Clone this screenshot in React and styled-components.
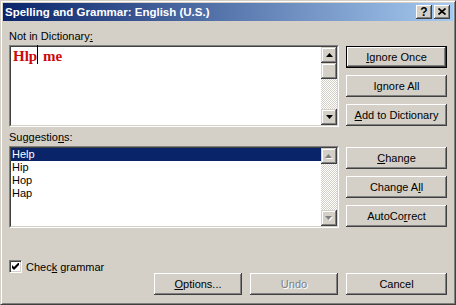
import React from 'react';
import styled, { createGlobalStyle, css } from 'styled-components';

// Classic Win2000 "Spelling and Grammar" dialog
const FACE = '#D4D0C8';

const GlobalStyle = createGlobalStyle`
  body {
    margin: 0;
    background: ${FACE};
    font-family: "Liberation Sans", Arial, sans-serif;
    font-size: 11px;
  }
`;

const raised = css`
  box-shadow: inset -1px -1px #404040, inset 1px 1px #ffffff, inset -2px -2px #808080;
`;

const Window = styled.div`
  width: 456px;
  height: 305px;
  box-sizing: border-box;
  background: ${FACE};
  border: 1px solid;
  border-color: ${FACE} #404040 #404040 ${FACE};
  box-shadow: inset 1px 1px #ffffff, inset -1px -1px #808080;
  padding: 2px;
  display: flex;
  flex-direction: column;
`;

const TitleBar = styled.div`
  height: 18px;
  display: flex;
  align-items: center;
  padding: 0 3px 0 2px;
  background: linear-gradient(to right, #0a246a, #a6caf0);
`;

const Title = styled.div`
  flex: 1;
  color: #ffffff;
  font-weight: bold;
  font-size: 11.5px;
  white-space: nowrap;
`;

const CaptionButton = styled.div`
  width: 16px;
  height: 14px;
  margin-left: ${(p) => (p.$gap ? '2px' : '0')};
  background: ${FACE};
  ${raised};
  display: flex;
  align-items: center;
  justify-content: center;
  font-weight: bold;
  font-size: 12px;
  color: #000;
  line-height: 14px;
  padding-bottom: 1px;
  box-sizing: border-box;
`;

const Body = styled.div`
  flex: 1;
  padding: 9px 6px 0 6px;
  display: flex;
  flex-direction: column;
`;

const Section = styled.div`
  display: flex;
  gap: 7px;
  margin-top: ${(p) => p.$top || 0}px;
`;

const Field = styled.div`
  width: 330px;
  display: flex;
  flex-direction: column;
`;

const Label = styled.div`
  line-height: 13px;
  height: 13px;
  margin-bottom: 2px;
  color: #000;
`;

const Well = styled.div`
  height: 82px;
  box-sizing: border-box;
  border: 1px solid;
  border-color: #808080 #ffffff #ffffff #808080;
`;

const WellInner = styled.div`
  height: 100%;
  box-sizing: border-box;
  border: 1px solid;
  border-color: #404040 ${FACE} ${FACE} #404040;
  background: #ffffff;
  display: flex;
`;

const Editor = styled.div`
  flex: 1;
  padding: 1px 2px 0;
  font-family: "Liberation Serif", "Times New Roman", serif;
  font-weight: bold;
  font-size: 15px;
  line-height: 17px;
  color: #cc0a0a;
`;

const Caret = styled.span`
  display: inline-block;
  width: 1px;
  height: 19px;
  background: #000;
  vertical-align: -3px;
  margin: -4px 1px 0 0;
`;

const List = styled.div`
  flex: 1;
  display: flex;
  flex-direction: column;
`;

const ListItem = styled.div`
  height: 13px;
  line-height: 13px;
  padding-left: 1px;
  color: ${(p) => (p.$selected ? '#ffffff' : '#000')};
  background: ${(p) => (p.$selected ? '#0a246a' : 'transparent')};
`;

const ScrollBar = styled.div`
  width: 16px;
  display: flex;
  flex-direction: column;
`;

const ScrollButton = styled.div`
  width: 16px;
  height: 16px;
  flex: none;
  background: ${FACE};
  box-sizing: border-box;
  box-shadow: inset -1px -1px #404040, inset 1px 1px ${FACE}, inset -2px -2px #808080, inset 2px 2px #ffffff;
  display: flex;
  align-items: center;
  justify-content: center;
`;

const Track = styled.div`
  flex: 1;
  background: repeating-conic-gradient(#ffffff 0 25%, ${FACE} 0 50%) 0 0 / 2px 2px;
`;

const ButtonColumn = styled.div`
  padding-top: 16px;
  display: flex;
  flex-direction: column;
  gap: 7px;
`;

const Button = styled.div`
  width: ${(p) => p.$width || 101}px;
  height: 22px;
  box-sizing: border-box;
  background: ${FACE};
  ${raised};
  border: ${(p) => (p.$default ? '1px solid #000' : 'none')};
  display: flex;
  align-items: center;
  justify-content: center;
  padding-bottom: 1px;
  color: ${(p) => (p.$disabled ? '#808080' : '#000')};
  text-shadow: ${(p) => (p.$disabled ? '1px 1px #ffffff' : 'none')};
  white-space: nowrap;
`;

const Footer = styled.div`
  margin-top: 32px;
  display: flex;
  justify-content: space-between;
`;

const CheckRow = styled.div`
  display: flex;
  align-items: center;
  gap: 4px;
  height: 13px;
`;

const CheckBox = styled.div`
  width: 13px;
  height: 13px;
  box-sizing: border-box;
  border: 1px solid;
  border-color: #808080 #ffffff #ffffff #808080;
  box-shadow: inset 1px 1px #404040, inset -1px -1px ${FACE};
  background: #ffffff;
  display: flex;
  align-items: center;
  justify-content: center;
`;

const ButtonRow = styled.div`
  padding-top: 13px;
  display: flex;
  gap: 8px;
`;

const Arrow = ({ up, color = '#000' }) => (
  <svg width="7" height="4" viewBox="0 0 7 4">
    {up ? (
      <polygon points="3.5,0 7,4 0,4" fill={color} />
    ) : (
      <polygon points="0,0 7,0 3.5,4" fill={color} />
    )}
  </svg>
);

const DisabledArrow = ({ up }) => (
  <svg width="8" height="5" viewBox="0 0 8 5">
    {up ? (
      <>
        <polygon points="4.5,1 8,5 1,5" fill="#ffffff" />
        <polygon points="3.5,0 7,4 0,4" fill="#808080" />
      </>
    ) : (
      <>
        <polygon points="1,1 8,1 4.5,5" fill="#ffffff" />
        <polygon points="0,0 7,0 3.5,4" fill="#808080" />
      </>
    )}
  </svg>
);

const App = () => {
  const suggestions = ['Help', 'Hip', 'Hop', 'Hap'];
  return (
    <>
      <GlobalStyle />
      <Window>
        <TitleBar>
          <Title>Spelling and Grammar: English (U.S.)</Title>
          <CaptionButton>?</CaptionButton>
          <CaptionButton $gap>
            <svg width="8" height="7" viewBox="0 0 8 7">
              <path d="M0.5 0.5 L7.5 6.5 M7.5 0.5 L0.5 6.5" stroke="#000" strokeWidth="1.7" />
            </svg>
          </CaptionButton>
        </TitleBar>

        <Body>
          <Section>
            <Field>
              <Label>Not in Dictionary<u>:</u></Label>
              <Well>
                <WellInner>
                  <Editor>
                    Hlp<Caret /> me
                  </Editor>
                  <ScrollBar>
                    <ScrollButton><Arrow up /></ScrollButton>
                    <ScrollButton />
                    <Track />
                    <ScrollButton><Arrow /></ScrollButton>
                  </ScrollBar>
                </WellInner>
              </Well>
            </Field>
            <ButtonColumn>
              <Button $default><u>I</u>gnore Once</Button>
              <Button>Ignore All</Button>
              <Button><u>A</u>dd to Dictionary</Button>
            </ButtonColumn>
          </Section>

          <Section $top={4}>
            <Field>
              <Label>Suggestio<u>n</u>s:</Label>
              <Well>
                <WellInner>
                  <List>
                    {suggestions.map((s, i) => (
                      <ListItem key={s} $selected={i === 0}>{s}</ListItem>
                    ))}
                  </List>
                  <ScrollBar>
                    <ScrollButton><DisabledArrow up /></ScrollButton>
                    <Track />
                    <ScrollButton><DisabledArrow /></ScrollButton>
                  </ScrollBar>
                </WellInner>
              </Well>
            </Field>
            <ButtonColumn>
              <Button><u>C</u>hange</Button>
              <Button>Change A<u>l</u>l</Button>
              <Button>AutoCo<u>r</u>rect</Button>
            </ButtonColumn>
          </Section>

          <Footer>
            <CheckRow>
              <CheckBox>
                <svg width="7" height="7" viewBox="0 0 7 7">
                  <path d="M0 2 L2 4 L7 -1 L7 2 L2 7 L0 5 Z" fill="#000" />
                </svg>
              </CheckBox>
              <span>Chec<u>k</u> grammar</span>
            </CheckRow>
            <ButtonRow>
              <Button $width={88}><u>O</u>ptions...</Button>
              <Button $width={88} $disabled>Undo</Button>
              <Button>Cancel</Button>
            </ButtonRow>
          </Footer>
        </Body>
      </Window>
    </>
  );
};

export default App;
